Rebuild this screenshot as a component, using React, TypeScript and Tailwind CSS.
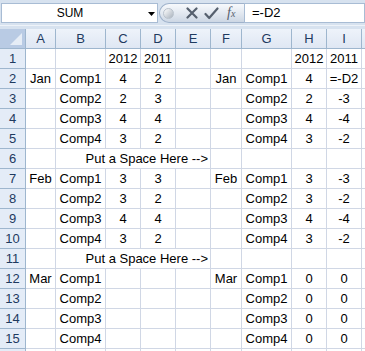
import React from "react";

const LETTERS = ["A", "B", "C", "D", "E", "F", "G", "H", "I"];

type Row = string[] | { space: true };

const ROWS: Row[] = [
  ["", "", "2012", "2011", "", "", "", "2012", "2011"],
  ["Jan", "Comp1", "4", "2", "", "Jan", "Comp1", "4", "=-D2"],
  ["", "Comp2", "2", "3", "", "", "Comp2", "2", "-3"],
  ["", "Comp3", "4", "4", "", "", "Comp3", "4", "-4"],
  ["", "Comp4", "3", "2", "", "", "Comp4", "3", "-2"],
  { space: true },
  ["Feb", "Comp1", "3", "3", "", "Feb", "Comp1", "3", "-3"],
  ["", "Comp2", "3", "2", "", "", "Comp2", "3", "-2"],
  ["", "Comp3", "4", "4", "", "", "Comp3", "4", "-4"],
  ["", "Comp4", "3", "2", "", "", "Comp4", "3", "-2"],
  { space: true },
  ["Mar", "Comp1", "", "", "", "Mar", "Comp1", "0", "0"],
  ["", "Comp2", "", "", "", "", "Comp2", "0", "0"],
  ["", "Comp3", "", "", "", "", "Comp3", "0", "0"],
  ["", "Comp4", "", "", "", "", "Comp4", "0", "0"],
  ["", "", "", "", "", "", "", "", ""],
];

const cell =
  "h-[20px] border-r border-b border-[#d0d7e5] bg-white flex items-center justify-center text-[13px] text-black whitespace-nowrap overflow-visible leading-none";
const rowHead =
  "h-[20px] border-r border-b border-[#9eb6ce] bg-[#e4ecf7] flex items-center justify-center text-[13px] text-[#1e3a5f] leading-none";

export default function App() {
  return (
    <div className="w-[365px] h-[351px] overflow-hidden bg-[#d7e2ef] font-['Liberation_Sans',Arial,sans-serif]">
      {/* formula bar */}
      <div className="h-[29px] pt-[3px] flex flex-col">
        <div className="h-[20px] flex items-stretch">
          <div className="ml-[1px] w-[157px] bg-white border border-[#a8bcd4] flex items-center relative">
            <span className="w-[136px] text-center text-[12px] text-black">SUM</span>
            <svg width="7" height="4" viewBox="0 0 7 4" className="absolute left-[146px] top-[8px]">
              <polygon points="0,0 7,0 3.5,4" fill="#000" />
            </svg>
          </div>
          <div className="w-[85px] ml-[1px] rounded-l-full border border-r-0 border-[#9fb2cb] bg-gradient-to-b from-[#f7f9fc] via-[#e3e9f1] to-[#cdd7e4] flex items-center">
            <div className="ml-[3px] w-[11px] h-[11px] rounded-full bg-gradient-to-br from-[#ffffff] to-[#a9b2bd] border border-[#b9c2cc]" />
            <svg width="12" height="12" viewBox="0 0 12 12" className="ml-[12px]">
              <path d="M1.5 1.5 L10.5 10.5 M10.5 1.5 L1.5 10.5" stroke="#56606e" strokeWidth="2.2" strokeLinecap="round" />
            </svg>
            <svg width="15" height="13" viewBox="0 0 15 13" className="ml-[6px]">
              <path d="M1.5 7 L5.2 11 L13.5 1.5" stroke="#56606e" strokeWidth="2.2" fill="none" strokeLinecap="round" strokeLinejoin="round" />
            </svg>
            <span className="ml-[8px] font-['Liberation_Serif',serif] italic text-[14px] text-[#56606e] leading-none">
              f<span className="text-[10px]">x</span>
            </span>
          </div>
          <div className="flex-1 bg-white border border-[#a8bcd4] flex items-center pl-[7px] text-[13px] text-black">
            =-D2
          </div>
        </div>
        <div className="mt-[2px] h-[1px] bg-[#eef3f9]" />
      </div>

      {/* grid */}
      <div className="grid grid-cols-[26px_30px_50px_35px_35px_35px_31px_50px_35px_35px_10px]">
        {/* header row */}
        <div className="h-[20px] border-r border-b border-[#9eb6ce] bg-[#b9cbe4] relative">
          <svg width="12" height="12" viewBox="0 0 12 12" className="absolute right-[3px] bottom-[3px]">
            <polygon points="12,0 12,12 0,12" fill="#e6edf6" />
          </svg>
        </div>
        {LETTERS.map((l) => (
          <div
            key={l}
            className="h-[20px] border-r border-b border-[#9eb6ce] bg-gradient-to-b from-[#eef3fa] to-[#dfe7f3] flex items-center justify-center text-[13px] text-[#1e3a5f] leading-none"
          >
            {l}
          </div>
        ))}
        <div className="h-[20px] border-b border-[#9eb6ce] bg-gradient-to-b from-[#eef3fa] to-[#dfe7f3]" />

        {ROWS.map((r, i) => {
          const n = i + 1;
          const label = n <= 15 ? String(n) : "";
          if (!Array.isArray(r)) {
            return (
              <React.Fragment key={n}>
                <div className={rowHead}>{label}</div>
                <div className={cell} />
                <div className={`${cell} col-span-4 justify-end pr-[2px]`}>Put a Space Here --&gt;</div>
                <div className={cell} />
                <div className={cell} />
                <div className={cell} />
                <div className={cell} />
                <div className={`${cell} border-r-0`} />
              </React.Fragment>
            );
          }
          return (
            <React.Fragment key={n}>
              <div className={rowHead}>{label}</div>
              {r.map((v, j) => (
                <div key={j} className={cell}>
                  {v}
                </div>
              ))}
              <div className={`${cell} border-r-0`} />
            </React.Fragment>
          );
        })}
      </div>
    </div>
  );
}
